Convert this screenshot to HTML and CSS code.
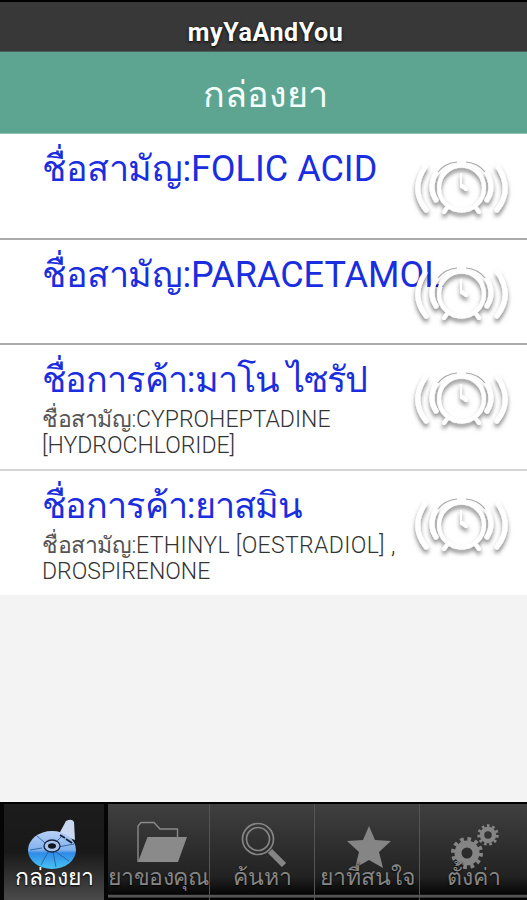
FILE: index.html
```html
<!DOCTYPE html>
<html lang="th">
<head>
    <meta charset="UTF-8">
    <meta name="viewport" content="width=device-width, initial-scale=1.0">
    <title>myYaAndYou</title>
    <link rel="stylesheet" href="styles.css">
</head>
<body>
    <svg class="defs" width="0" height="0">
        <defs>
            <filter id="shade" x="-10%" y="-10%" width="120%" height="130%">
                <feDropShadow dx="0" dy="3.5" stdDeviation="2" flood-color="#000" flood-opacity=".5"/>
            </filter>
        </defs>
        <symbol id="alarm" viewBox="0 0 115 90">
            <path fill="#fff" d="M31 24Q26 10 43 9H70Q87 10 82 24Z"/>
            <g fill="none" stroke="#fff" stroke-linecap="round" filter="url(#shade)">
                <path stroke-width="5" d="M20 21Q5 44 21 64M93 21Q108 44 92 64"/>
                <path stroke-width="5" d="M31 27Q23 42 31 54M82 27Q90 42 82 54"/>
                <circle cx="56.5" cy="42" r="22.500" stroke-width="4"/>
                <path stroke-width="4" d="M42 62L39 66M71 62L74 66"/>
                <path stroke-width="2" d="M56 28V41"/>
                <path stroke-width="4" d="M57 40L61 43"/>
            </g>
            <path fill="none" stroke="#aaa" stroke-width="1.2" d="M33 26Q40 17 52 16M61 16Q73 17 80 26"/>
        </symbol>
    </svg>
    <div class="app">
        <header class="title-bar">myYaAndYou</header>
        <h1 class="heading">กล่องยา</h1>
        <main class="list">
            <div class="item">
                <p class="name"><span class="th">ชื่อสามัญ:</span>FOLIC ACID</p>
                <svg class="alarm"><use href="#alarm"/></svg>
            </div>
            <div class="item">
                <p class="name"><span class="th">ชื่อสามัญ:</span>PARACETAMOL</p>
                <svg class="alarm"><use href="#alarm"/></svg>
            </div>
            <div class="item tall">
                <p class="name"><span class="trade">ชื่อการค้า:มาโน ไซรัป</span></p>
                <p class="generic"><span class="th">ชื่อสามัญ:</span>CYPROHEPTADINE<br>[HYDROCHLORIDE]</p>
                <svg class="alarm"><use href="#alarm"/></svg>
            </div>
            <div class="item tall">
                <p class="name"><span class="trade">ชื่อการค้า:ยาสมิน</span></p>
                <p class="generic"><span class="th">ชื่อสามัญ:</span><span class="loose">ETHINYL [OESTRADIOL] ,</span><br>DROSPIRENONE</p>
                <svg class="alarm"><use href="#alarm"/></svg>
            </div>
        </main>
        <nav class="tabs">
            <div class="tab active">
                <svg class="icon" viewBox="0 0 60 54">
                    <defs>
                        <linearGradient id="disc" x2="0" y2="1">
                            <stop offset="0" stop-color="#b9d0f5"/>
                            <stop offset=".5" stop-color="#7fb2f0"/>
                            <stop offset=".58" stop-color="#2f8ae6"/>
                            <stop offset="1" stop-color="#49c4f5"/>
                        </linearGradient>
                    </defs>
                    <path fill="#cbd8f2" d="M36 19L43 6Q49 3 51 7L52 25Z"/>
                    <ellipse cx="29" cy="35" rx="24" ry="19" fill="url(#disc)"/>
                    <path fill="none" stroke="#24558f" stroke-width=".8" d="M19 33L7 35M33 37L46 46M25 37L18 50M33 27L39 21M35 32L51 29M22 28L14 21M30 37L33 52"/>
                    <ellipse cx="29" cy="31" rx="8" ry="6" fill="#a9c4ea" stroke="#17243c" stroke-width="1.3"/>
                    <ellipse cx="29" cy="31" rx="4" ry="2.8" fill="#10151f"/>
                    <path fill="none" stroke="#14233c" stroke-width="2" d="M37 20L42 23M43 24L49 28"/>
                </svg>
                <span>กล่องยา</span>
            </div>
            <div class="tab files">
                <svg class="icon" viewBox="0 0 60 54">
                    <path fill="none" stroke="#8a8a8a" stroke-width="1.4" d="M8 47V11L11 7.500H24L30 14H47.500V23"/>
                    <path fill="#8a8a8a" d="M17.500 22H57L48 47H8Z"/>
                </svg>
                <span>ยาของคุณ</span>
            </div>
            <div class="tab search">
                <svg class="icon" viewBox="0 0 60 54">
                    <g fill="none" stroke="#858585">
                        <circle cx="24" cy="24" r="15.5" stroke-width="1.7"/>
                        <circle cx="24" cy="24" r="11.5" stroke-width="1.7"/>
                        <path stroke-width="6" d="M36 36L50 50"/>
                    </g>
                </svg>
                <span>ค้นหา</span>
            </div>
            <div class="tab star">
                <svg class="icon" viewBox="0 0 60 54">
                    <path fill="#858585" d="M30 11L36 25L52 26L40 37L44 53L30 45L16 53L20 37L8 26L24 25Z"/>
                </svg>
                <span>ยาที่สนใจ</span>
            </div>
            <div class="tab settings">
                <svg class="icon" viewBox="0 0 60 54">
                    <g fill="none" stroke="#858585">
                        <circle cx="22" cy="38" r="9" stroke-width="7"/>
                        <circle cx="22" cy="38" r="14" stroke-width="4" stroke-dasharray="3.67 3.66"/>
                        <circle cx="43" cy="20" r="6" stroke-width="4.5"/>
                        <circle cx="43" cy="20" r="9.2" stroke-width="3" stroke-dasharray="2.63 2.62"/>
                    </g>
                </svg>
                <span>ตั้งค่า</span>
            </div>
        </nav>
    </div>
</body>
</html>
```
FILE: styles.css
```css
* {
    box-sizing: border-box;
}
body {
    margin: 0;
    font-family: Roboto, "DejaVu Sans", "Noto Sans CJK SC", sans-serif;
    background-color: #f3f3f3;
}
p, h1 {
    margin: 0;
    font-weight: 400;
}
.defs {
    position: absolute;
}
.app {
    display: flex;
    flex-direction: column;
    width: 527px;
    height: 900px;
    overflow: hidden;
}
.title-bar {
    height: 52px;
    border-top: 2px solid #000;
    border-bottom: 1px solid #4b6058;
    background-color: #383838;
    color: #fff;
    font-size: 25px;
    font-weight: 700;
    letter-spacing: .6px;
    line-height: 61px;
    padding-left: 4px;
    text-align: center;
    text-shadow: 0 1px 3px #000;
}
.heading {
    height: 82px;
    background-color: #5da591;
    border-bottom: 1px solid #8fc2b3;
    color: #f4fffc;
    font-size: 36px;
    line-height: 86px;
    padding-left: 4px;
    text-align: center;
}
.list {
    background-color: #fff;
}
.item {
    position: relative;
    height: 105.5px;
    padding: 14px 0 0 42px;
    border-bottom: 2px solid #aaa;
    white-space: nowrap;
}
.item.tall {
    height: 126px;
}
.item.tall:nth-child(3) {
    border-bottom: 2px solid #d4d4d4;
}
.item.tall:last-child {
    height: 124px;
    border-bottom: none;
}
.name {
    height: 42px;
    color: #1a2ee0;
    font-size: 36px;
    line-height: 42px;
}
.name .th {
    letter-spacing: -.4px;
}
.name .trade {
    letter-spacing: -.9px;
}
.generic {
    color: #333;
    font-size: 23px;
    font-weight: 300;
    line-height: 26px;
    margin-top: 6px;
}
.generic .th {
    color: #555;
    letter-spacing: -.4px;
}
.loose {
    letter-spacing: .35px;
}
.alarm {
    position: absolute;
    right: 7px;
    top: 12px;
    width: 115px;
    height: 90px;
}
.tabs {
    display: flex;
    height: 98px;
    margin-top: auto;
    border-top: 2px solid #000;
    background: linear-gradient(#404040, #222 75%, #080808 93%, #000 94%, #555 95%, #555 97%, #000 98%);
}
.tab {
    display: flex;
    flex-direction: column;
    align-items: center;
    flex: none;
    width: 105px;
    padding-top: 11px;
    border-right: 1px solid #555;
    color: #858585;
    font-size: 23px;
    white-space: nowrap;
}
.tab:last-child {
    border-right: none;
    width: 107px;
}
.tab .icon {
    margin-left: 3px;
}
.tab.files {
    width: 102px;
    letter-spacing: -.4px;
}
.tab.files .icon {
    margin-left: 2px;
}
.tab.active {
    width: 108px;
    background: linear-gradient(#1c1c1c, #191919 50%, #4a4a4a);
    border: solid #050505;
    border-width: 0 4px;
    color: #fff;
}
.tab.active .icon {
    margin-left: -3px;
}
.tab span {
    height: 28px;
    line-height: 28px;
    margin-top: -5px;
    text-shadow: 0 1px 2px #000;
}
.icon {
    flex: none;
    width: 60px;
    height: 54px;
}
```
